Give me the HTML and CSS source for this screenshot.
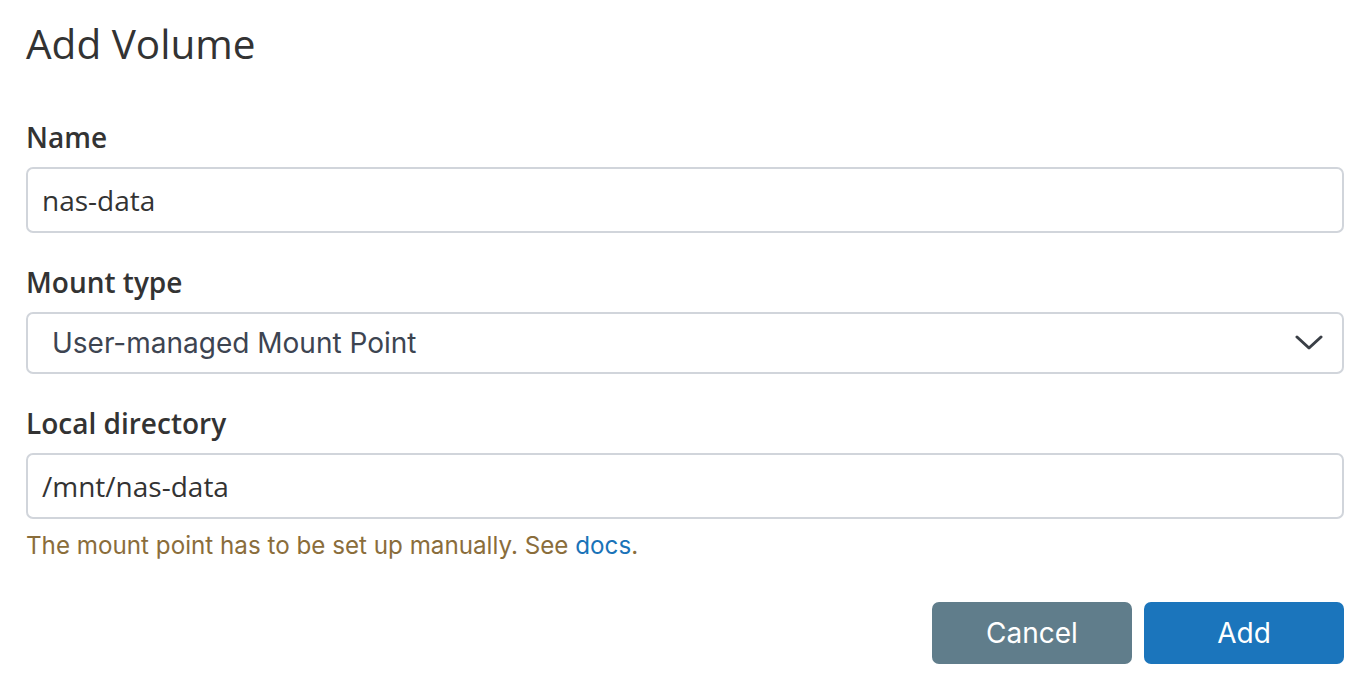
FILE: index.html
```html
<!DOCTYPE html>
<html lang="en">
<head>
<meta charset="utf-8">
<title>Add Volume</title>
<link rel="stylesheet" href="styles.css">
</head>
<body>
<div class="dialog">
  <h1 class="title">Add Volume</h1>
  <form class="form">
    <div class="field">
      <label class="label">Name</label>
      <div class="input">nas-data</div>
    </div>
    <div class="field">
      <label class="label">Mount type</label>
      <div class="select">
        <span class="select-value">User-managed Mount Point</span>
        <svg class="chevron" width="28" height="16" viewBox="0 0 28 16"><path d="M2 2 L14 13 L26 2" fill="none" stroke="#3a3f46" stroke-width="3" stroke-linecap="round" stroke-linejoin="round"/></svg>
      </div>
    </div>
    <div class="field">
      <label class="label">Local directory</label>
      <div class="input">/mnt/nas-data</div>
      <p class="help">The mount point has to be set up manually. See <a class="link" href="#">docs</a>.</p>
    </div>
    <div class="actions">
      <button type="button" class="btn btn-cancel">Cancel</button>
      <button type="button" class="btn btn-add">Add</button>
    </div>
  </form>
</div>
</body>
</html>
```
FILE: styles.css
```css
html, body {
  margin: 0;
  padding: 0;
  background: #ffffff;
}
body {
  font-family: "Open Sans", "Noto Sans", sans-serif;
  color: #333333;
}
.dialog {
  padding: 20px 24px 0 26px;
}
.title {
  margin: 0;
  font-family: "Open Sans", sans-serif;
  font-weight: 400;
  font-size: 40.5px;
  line-height: 48px;
  color: #333333;
}
.form {
  margin-top: 51px;
  display: flex;
  flex-direction: column;
}
.field {
  display: flex;
  flex-direction: column;
  margin-bottom: 31px;
}
.label {
  font-weight: 600;
  font-size: 28px;
  line-height: 36px;
  margin-bottom: 12px;
  color: #333333;
}
.input {
  box-sizing: border-box;
  height: 66px;
  border: 2px solid #d1d5db;
  border-radius: 7px;
  padding: 0 14px;
  display: flex;
  align-items: center;
  font-size: 28px;
  color: #333333;
}
.select {
  box-sizing: border-box;
  height: 62px;
  border: 2px solid #d1d5db;
  border-radius: 7px;
  padding: 0 19px 0 24px;
  display: flex;
  align-items: center;
  justify-content: space-between;
  font-family: "Inter", sans-serif;
  font-size: 28px;
  color: #3d4451;
}
.chevron {
  display: block;
}
.help {
  margin: 12px 0 0;
  font-family: "Inter", sans-serif;
  font-size: 24.2px;
  line-height: 30px;
  color: #8a6d3b;
}
.link {
  color: #1a73b8;
  text-decoration: none;
}
.actions {
  display: flex;
  justify-content: flex-end;
  gap: 12px;
  margin-top: 10px;
}
.btn {
  width: 200px;
  height: 62px;
  border: none;
  border-radius: 7px;
  font-family: "Inter", sans-serif;
  font-size: 28px;
  color: #ffffff;
  cursor: pointer;
}
.btn-cancel {
  background: #607d8b;
}
.btn-add {
  background: #1b75bc;
}
```
